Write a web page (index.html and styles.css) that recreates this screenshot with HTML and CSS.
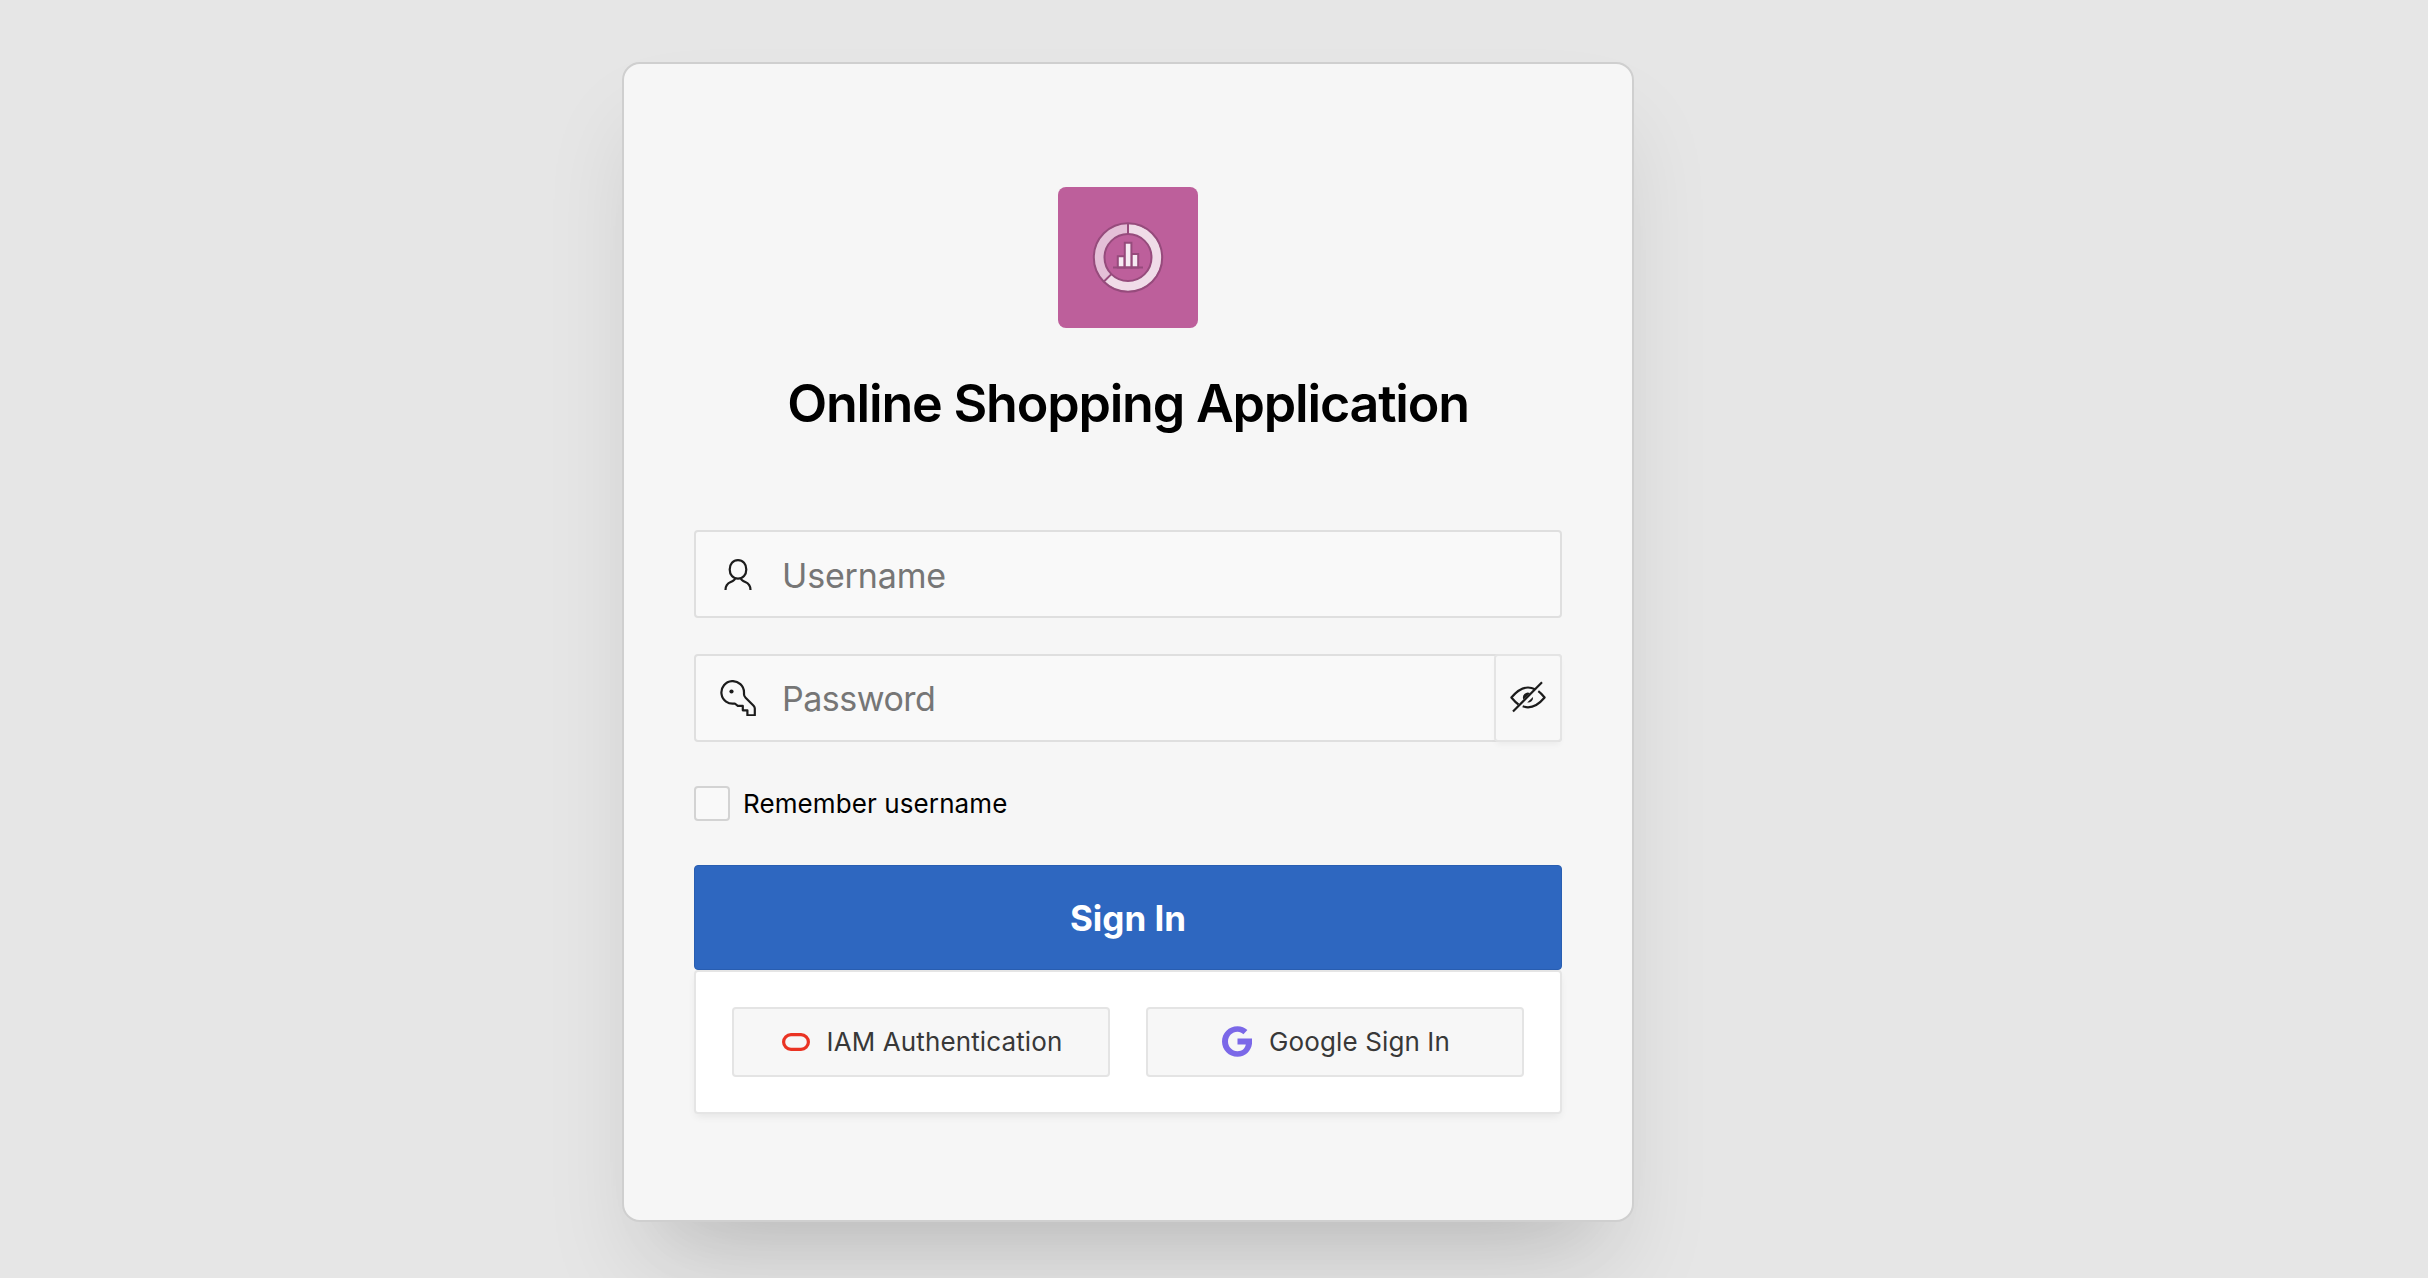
FILE: index.html
```html
<!DOCTYPE html>
<html lang="en">
<head>
<meta charset="utf-8">
<title>Online Shopping Application</title>
<link rel="stylesheet" href="styles.css">
</head>
<body>
<main class="card">
  <svg class="logo" viewBox="0 0 140 141" aria-hidden="true">
    <rect width="140" height="141" rx="8" fill="#bd5f9b"/>
    <g transform="translate(0 .5)">
      <circle cx="70" cy="70" r="28.5" fill="none" stroke="#f0dce8" stroke-width="10"/>
      <path d="M49.8 90.2A28.500 28.500 0 0 1 70 41.500" fill="none" stroke="#e4bfd7" stroke-width="10"/>
      <g fill="none" stroke="#964b7c" stroke-width="2">
        <circle cx="70" cy="70" r="34.200"/>
        <circle cx="70" cy="70" r="23.500"/>
        <path d="M70 36v11M46.200 93.800l7.200-7.200"/>
      </g>
      <g fill="#f6ebf3" stroke="#964b7c" stroke-width="2">
        <path d="M59.800 80V68.800h6.700V80zM73.500 80V66.600h6.700V80z"/>
        <path d="M66.800 80V55.300h6.600V80z"/>
      </g>
      <path d="M55 80h30" stroke="#964b7c" stroke-width="2"/>
    </g>
  </svg>
  <h1 class="title">Online Shopping Application</h1>
  <form class="form">
    <label class="field">
      <svg class="field-icon user" viewBox="0 0 36 36"><path d="M18 3.200c5 0 8.300 4 8.300 9.200s-3.300 9.200-8.300 9.200-8.300-4-8.300-9.200S13 3.200 18 3.200zM15 21.500c0 1.600-1.400 2.300-4.300 3.500-3.800 1.500-5.200 3.400-5.200 8M21 21.500c0 1.600 1.400 2.300 4.300 3.500 3.800 1.500 5.200 3.400 5.200 8"/></svg>
      <input class="input" type="text" placeholder="Username">
    </label>
    <div class="field">
      <svg class="field-icon" viewBox="0 0 36 36"><path d="M24 12.300a11.300 11.300 0 1 0-9.200 11.200l3 2.400h5v4.400h4.600v5h7.400v-6.700c0-1.100-.4-1.900-1.200-2.800l-8-8c-1-1-1.600-2.200-1.600-3.500z"/><circle class="dot" cx="11.500" cy="11.500" r="2.100"/></svg>
      <input class="input password" type="password" placeholder="Password">
      <button class="reveal" type="button" aria-label="Show password">
        <svg viewBox="0 0 36 36"><path d="M8.500 24.500C5.500 22.500 3.500 20 1.400 17.500 6.500 11.500 11.500 7.500 18 7.500c2.500 0 4.800.6 7 1.700M28.300 11.200c2.500 1.800 4.400 4 6.300 6.300-5 6-10 9.800-16.600 9.800-1.900 0-3.700-.4-5.300-1"/><path d="M3 31.500 32 2.300"/><path class="pupil" d="M13.400 19.600A5 5 0 0 1 20 13zM23 17a5 5 0 0 1-5.800 5.500z"/></svg>
      </button>
    </div>
    <label class="remember"><span class="check"></span><span>Remember username</span></label>
    <button class="primary" type="button">Sign In</button>
  </form>
  <section class="providers">
    <button class="provider iam" type="button">
      <svg width="28" height="18" viewBox="0 0 28 18"><rect x="1.600" y="1.600" width="24.800" height="14.800" rx="7.400" fill="none" stroke="#ea3323" stroke-width="3.200"/></svg>
      <span>IAM Authentication</span>
    </button>
    <button class="provider google" type="button">
      <svg width="30" height="31" viewBox="0 0 30 31"><path d="M15.500 12.600H30c1.300 9.500-4.500 18.200-14.500 18.200C6.800 30.800 0 24 0 15.500S6.800.2 15.500.2c4 0 7.300 1.400 9.900 3.900l-4 4.100C19.800 6.700 17.900 5.800 15.500 5.800c-5.300 0-9.500 4.300-9.500 9.700s4.200 9.700 9.500 9.700c4.600 0 7.500-2.600 8.300-6.700h-8.300z" fill="#7b68e8"/></svg>
      <span>Google Sign In</span>
    </button>
  </section>
</main>
</body>
</html>
```
FILE: styles.css
```css
* { box-sizing: border-box; }
body {
  margin: 0;
  height: 1278px;
  overflow: hidden;
  padding: 62px 0 0 622px;
  background: #e6e6e6;
  font-family: Inter, "Liberation Sans", sans-serif;
}
button, input { font-family: inherit; margin: 0; }
.card {
  width: 1012px;
  height: 1160px;
  padding: 123px 70px 0;
  display: flex;
  flex-direction: column;
  align-items: center;
  background: #f6f6f6;
  border: 2px solid #cfcfcf;
  border-radius: 18px;
  box-shadow: 0 64px 80px -72px rgba(0, 0, 0, .17), 0 56px 92px -8px rgba(0, 0, 0, .095);
}
.logo { width: 140px; height: 141px; flex: none; }
.title {
  margin: 44px 0 0;
  height: 64px;
  line-height: 64px;
  font-size: 52px;
  font-weight: 600;
  letter-spacing: -1.2px;
  color: #000;
  white-space: nowrap;
}
.form { width: 868px; margin-top: 94px; display: flex; flex-direction: column; }
.field {
  display: flex;
  align-items: center;
  height: 88px;
  margin-bottom: 36px;
  padding-left: 24px;
  background: #f9f9f9;
  border: 2px solid #dfdfdf;
  border-radius: 4px;
}
.field-icon, .reveal svg {
  width: 36px;
  height: 36px;
  flex: none;
  fill: none;
  stroke: #1c1c1c;
  stroke-width: 2.200;
  stroke-linejoin: round;
}
.field-icon.user { margin-top: 1px; }
.field-icon .dot, .reveal .pupil { fill: #1c1c1c; stroke: none; }
.input {
  flex: 1;
  min-width: 0;
  height: 84px;
  padding: 2px 0 0;
  margin-left: 26px;
  border: 0;
  background: transparent;
  font-size: 34px;
  letter-spacing: -.15px;
  outline: 0;
}
.input.password { padding: 0; letter-spacing: -.5px; }
.input::placeholder { color: #767676; }
.reveal {
  width: 68px;
  height: 88px;
  margin-right: -2px;
  padding: 0;
  display: flex;
  align-items: center;
  justify-content: center;
  background: #f8f8f8;
  border: 2px solid #e4e4e4;
  border-radius: 4px;
  box-shadow: 0 4px 6px -2px rgba(0, 0, 0, .05);
}
.remember {
  display: flex;
  align-items: center;
  gap: 13px;
  height: 35px;
  margin-top: 8px;
  font-size: 26px;
  line-height: 32px;
  letter-spacing: .1px;
  color: #000;
}
.check { width: 36px; height: 35px; background: #f9f9f9; border: 2px solid #d3d3d3; border-radius: 4px; }
.primary {
  height: 105px;
  margin-top: 44px;
  padding: 0;
  border: 1px solid #295eb1;
  border-radius: 4px;
  background: #2e67c0;
  color: #fff;
  font-size: 35px;
  font-weight: 700;
}
.providers {
  width: 868px;
  height: 144px;
  display: flex;
  gap: 36px;
  padding: 35px 36px;
  background: #fff;
  border: 2px solid #e5e5e5;
  border-radius: 4px;
  box-shadow: 0 4px 8px -2px rgba(0, 0, 0, .08);
}
.provider {
  flex: 1;
  height: 70px;
  padding: 0 0 1px 2px;
  display: flex;
  align-items: center;
  justify-content: center;
  background: #f7f7f7;
  border: 2px solid #e4e4e4;
  border-radius: 4px;
  color: #383838;
  font-size: 26px;
  letter-spacing: .12px;
  white-space: nowrap;
}
.iam { gap: 17px; }
.google { gap: 17px; }
```
